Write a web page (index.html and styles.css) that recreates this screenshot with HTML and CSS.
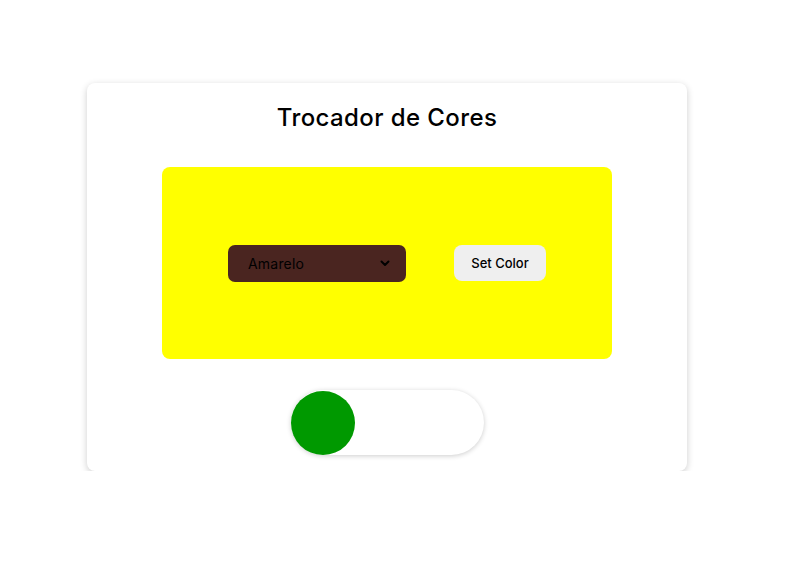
FILE: index.html
```html
<!DOCTYPE html>
<html lang="pt">
<head>
<meta charset="utf-8">
<title>Trocador de Cores</title>
<link rel="stylesheet" href="styles.css">
</head>
<body>
<main class="card">
  <h1 class="title">Trocador de Cores</h1>
  <section class="panel">
    <div class="select">
      <span class="select-text">Amarelo</span>
      <svg class="chev" width="10" height="7" viewBox="0 0 10 7"><path d="M1.5 1.5 L5 5 L8.5 1.5" fill="none" stroke="#000" stroke-width="2" stroke-linecap="round" stroke-linejoin="round"/></svg>
    </div>
    <button class="btn">Set Color</button>
  </section>
  <div class="toggle"><span class="knob"></span></div>
</main>
</body>
</html>
```
FILE: styles.css
```css
* { box-sizing: border-box; }
html, body { margin: 0; padding: 0; background: #fff; }
body {
  font-family: "Inter", "Liberation Sans", sans-serif;
  padding: 83px 0 0 87px;
}
.card {
  width: 600px;
  height: 388px;
  background: #fff;
  border-radius: 8px;
  box-shadow: 0 2px 7px rgba(0,0,0,0.2);
  display: flex;
  flex-direction: column;
  align-items: center;
  padding-top: 20px;
}
.title {
  margin: 0;
  font-size: 24px;
  font-weight: 500;
  letter-spacing: 0.4px;
  line-height: 30px;
  color: #000;
}
.panel {
  margin-top: 34px;
  width: 450px;
  height: 192px;
  background: #ffff00;
  border-radius: 8px;
  display: flex;
  align-items: center;
  justify-content: center;
  gap: 48px;
}
.select {
  width: 178px;
  height: 37px;
  background: #4a2520;
  border-radius: 7px;
  display: flex;
  align-items: center;
  justify-content: space-between;
  padding: 0 16px 0 20px;
  font-size: 14px;
  letter-spacing: 0.2px;
  color: #000;
}
.chev { display: block; }
.btn {
  width: 92px;
  height: 36px;
  border: none;
  border-radius: 8px;
  background: #efefef;
  font-family: inherit;
  font-size: 13px;
  font-weight: 500;
  color: #000;
  padding: 0;
}
.toggle {
  margin-top: 31px;
  width: 193px;
  height: 65px;
  border-radius: 33px;
  background: #fff;
  box-shadow: 0 1px 5px rgba(0,0,0,0.2);
  display: flex;
  align-items: center;
}
.knob {
  width: 64px;
  height: 64px;
  border-radius: 50%;
  background: #009900;
}
```
